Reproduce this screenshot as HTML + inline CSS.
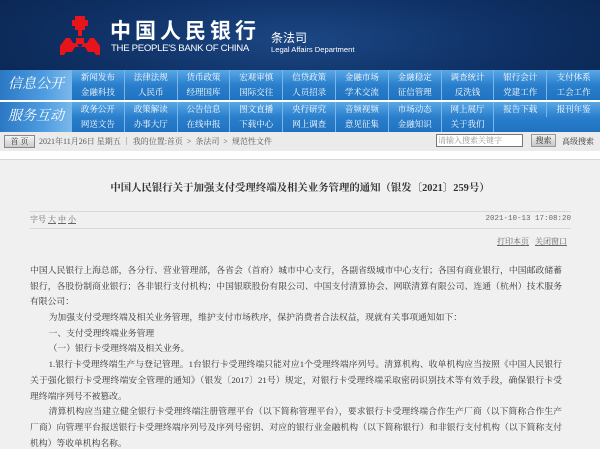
<!DOCTYPE html>
<html><head><meta charset="utf-8"><style>
*{margin:0;padding:0;box-sizing:border-box}
body{width:600px;height:445px;overflow:hidden;background:#fff;font-family:"Liberation Serif","Noto Serif CJK SC",serif;position:relative}
.hdr{position:absolute;left:0;top:0;width:600px;height:70px;background:radial-gradient(ellipse 380px 90px at 300px 40px,#1c4784 0%,#0f3166 55%,#0a2550 100%)}
.ab{position:absolute;white-space:nowrap}
.nav{position:absolute;left:0;width:600px;height:30px;background:linear-gradient(#5aa8e6,#2a7fcc 50%,#1f72c0)}
.lab{position:absolute;left:0;top:0;width:72px;height:30px;background:linear-gradient(90deg,#2c78c4,#4d9ce0 60%,#7bb8ea);color:#fff;font-style:italic;font-size:14px;line-height:30px;text-align:center;font-family:"Liberation Serif","Noto Serif CJK SC",serif}
.it{position:absolute;width:52.8px;height:15px;line-height:15px;text-align:center;color:#fff;font-size:8.5px;border-right:1px solid #7ab6e8}
.bc{position:absolute;left:0;top:132px;width:600px;height:19px;background:#ebebeb;font-size:8px;color:#555}
.panel{position:absolute;left:0;top:159px;width:600px;height:290px;background:#f0f0f0;border-top:1px solid #d6d6d6}
.body{position:absolute;left:30px;top:103px;width:532px;font-size:8.8px;line-height:15.7px;color:#333}
.body div{white-space:nowrap;height:15.7px}
.body div.f{text-align:justify;text-align-last:justify;white-space:normal;overflow:hidden}
.body div.i{padding-left:18.6px}
</style></head><body>
<div class="hdr">
<svg class="ab" style="left:58px;top:16px" width="44" height="42" viewBox="0 0 44 42">
<g fill="#e8141c">
<path d="M17 0h10v4h3v6h-3v4h-3v6h-4v-6h-3v-4h-3v-6h3z"/>
<path d="M2 30l6-8h4l3 5h4l2 4h-4l-3 5h-6l-2 3h-4z"/>
<path d="M42 30l-6-8h-4l-3 5h-4l-2 4h4l3 5h6l2 3h4z"/>
<path d="M18 22h8v6h-8z"/>
</g></svg>
<div class="ab" style="left:110px;top:17px;color:#fff;font-size:21px;line-height:26px;letter-spacing:4px;font-family:'Noto Sans CJK SC',sans-serif;font-weight:bold">中国人民银行</div>
<div class="ab" style="left:111px;top:44px;color:#fff;font-size:9.6px;line-height:10px;letter-spacing:-0.3px;font-family:'Liberation Sans',sans-serif">THE PEOPLE'S BANK OF CHINA</div>
<div class="ab" style="left:271px;top:29px;color:#fff;font-size:12px;font-family:'Noto Sans CJK SC',sans-serif">条法司</div>
<div class="ab" style="left:271px;top:45px;color:#fff;font-size:7.6px;font-family:'Liberation Sans',sans-serif">Legal Affairs Department</div>
</div>
<div class="nav" style="top:70px"><div class="lab">信息公开</div>
<div class="it" style="left:72px;top:0">新闻发布</div><div class="it" style="left:124.8px;top:0">法律法规</div><div class="it" style="left:177.6px;top:0">货币政策</div><div class="it" style="left:230.4px;top:0">宏观审慎</div><div class="it" style="left:283.2px;top:0">信贷政策</div><div class="it" style="left:336px;top:0">金融市场</div><div class="it" style="left:388.8px;top:0">金融稳定</div><div class="it" style="left:441.6px;top:0">调查统计</div><div class="it" style="left:494.4px;top:0">银行会计</div><div class="it" style="left:547.2px;top:0;border:0">支付体系</div>
<div class="it" style="left:72px;top:15px">金融科技</div><div class="it" style="left:124.8px;top:15px">人民币</div><div class="it" style="left:177.6px;top:15px">经理国库</div><div class="it" style="left:230.4px;top:15px">国际交往</div><div class="it" style="left:283.2px;top:15px">人员招录</div><div class="it" style="left:336px;top:15px">学术交流</div><div class="it" style="left:388.8px;top:15px">征信管理</div><div class="it" style="left:441.6px;top:15px">反洗钱</div><div class="it" style="left:494.4px;top:15px">党建工作</div><div class="it" style="left:547.2px;top:15px;border:0">工会工作</div>
</div>
<div class="nav" style="top:102px"><div class="lab">服务互动</div>
<div class="it" style="left:72px;top:0">政务公开</div><div class="it" style="left:124.8px;top:0">政策解读</div><div class="it" style="left:177.6px;top:0">公告信息</div><div class="it" style="left:230.4px;top:0">图文直播</div><div class="it" style="left:283.2px;top:0">央行研究</div><div class="it" style="left:336px;top:0">音频视频</div><div class="it" style="left:388.8px;top:0">市场动态</div><div class="it" style="left:441.6px;top:0">网上展厅</div><div class="it" style="left:494.4px;top:0">报告下载</div><div class="it" style="left:547.2px;top:0;border:0">报刊年鉴</div>
<div class="it" style="left:72px;top:15px">网送文告</div><div class="it" style="left:124.8px;top:15px">办事大厅</div><div class="it" style="left:177.6px;top:15px">在线申报</div><div class="it" style="left:230.4px;top:15px">下载中心</div><div class="it" style="left:283.2px;top:15px">网上调查</div><div class="it" style="left:336px;top:15px">意见征集</div><div class="it" style="left:388.8px;top:15px">金融知识</div><div class="it" style="left:441.6px;top:15px">关于我们</div>
</div>
<div class="bc">
<div class="ab" style="left:4px;top:3px;width:31px;height:13px;background:linear-gradient(#f4f4f4,#ccc);border:1px solid #888;font-size:8px;line-height:11px;text-align:center;color:#333">首 页</div>
<div class="ab" style="left:39px;top:4px">2021年11月26日 星期五 ｜ 我的位置:首页 &nbsp;&gt;&nbsp; 条法司 &nbsp;&gt;&nbsp; 规范性文件</div>
<div class="ab" style="left:436px;top:2px;width:87px;height:13px;background:#fff;border:1px solid #777;font-size:8px;line-height:11px;color:#999;padding-left:1px">请输入搜索关键字</div>
<div class="ab" style="left:531px;top:2px;width:25px;height:13px;background:linear-gradient(#f0f0f0,#c8c8c8);border:1px solid #999;font-size:8px;line-height:11px;text-align:center;color:#333">搜索</div>
<div class="ab" style="left:562px;top:4px;color:#333">高级搜索</div>
</div>
<div class="panel">
<div class="ab" style="left:0;width:600px;top:19px;text-align:center;font-size:10.4px;font-weight:bold;color:#333">中国人民银行关于加强支付受理终端及相关业务管理的通知（银发〔2021〕259号）</div>
<div class="ab" style="left:30px;top:51px;width:541px;border-top:1px solid #d8d8d8"></div>
<div class="ab" style="left:30px;top:54px;font-size:8px;color:#666">字号 <u>大</u> <u>中</u> <u>小</u></div>
<div class="ab" style="left:460px;top:55px;width:111px;text-align:right;font-size:7.5px;color:#666;font-family:'Liberation Mono',monospace">2021-10-13 17:08:20</div>
<div class="ab" style="left:30px;top:68px;width:541px;border-top:1px solid #d8d8d8"></div>
<div class="ab" style="left:497px;top:76px;font-size:8px;color:#666"><u>打印本页</u> &nbsp; <u>关闭窗口</u></div>
<div class="body">
<div class="f">中国人民银行上海总部，各分行、营业管理部，各省会（首府）城市中心支行，各副省级城市中心支行；各国有商业银行，中国邮政储蓄</div>
<div class="f">银行，各股份制商业银行；各非银行支付机构；中国银联股份有限公司、中国支付清算协会、网联清算有限公司、连通（杭州）技术服务</div>
<div>有限公司：</div>
<div class="i">为加强支付受理终端及相关业务管理，维护支付市场秩序，保护消费者合法权益，现就有关事项通知如下：</div>
<div class="i">一、支付受理终端业务管理</div>
<div class="i">（一）银行卡受理终端及相关业务。</div>
<div class="f i">1.银行卡受理终端生产与登记管理。1台银行卡受理终端只能对应1个受理终端序列号。清算机构、收单机构应当按照《中国人民银行</div>
<div class="f">关于强化银行卡受理终端安全管理的通知》（银发〔2017〕21号）规定，对银行卡受理终端采取密码识别技术等有效手段，确保银行卡受</div>
<div>理终端序列号不被篡改。</div>
<div class="f i">清算机构应当建立健全银行卡受理终端注册管理平台（以下简称管理平台），要求银行卡受理终端合作生产厂商（以下简称合作生产</div>
<div class="f">厂商）向管理平台报送银行卡受理终端序列号及序列号密钥、对应的银行业金融机构（以下简称银行）和非银行支付机构（以下简称支付</div>
<div>机构）等收单机构名称。</div>
</div>
</div>
</body></html>
